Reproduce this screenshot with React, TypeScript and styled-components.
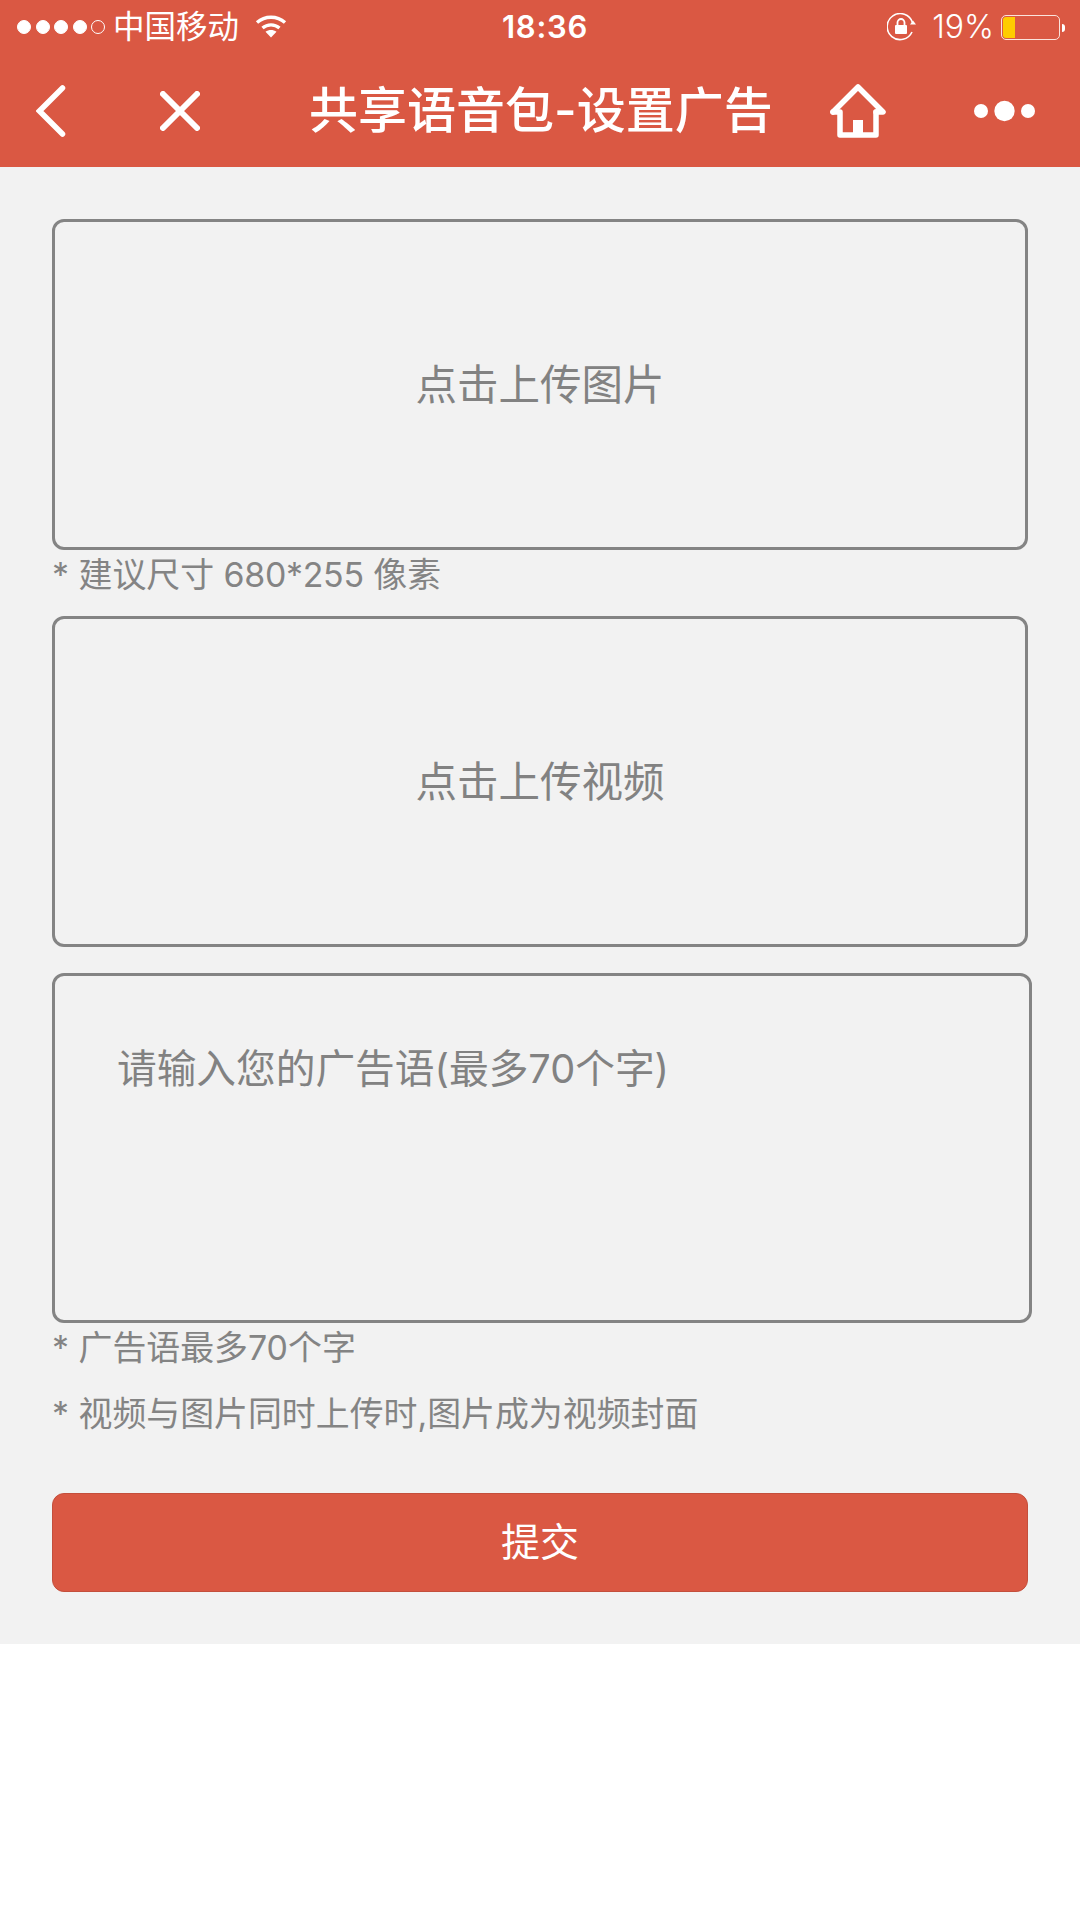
import React from "react";
import styled, { createGlobalStyle } from "styled-components";

const FONT = `"Inter", "Noto Sans CJK SC", sans-serif`;

const Global = createGlobalStyle`
  html, body { margin: 0; padding: 0; background: #fff; }
  body { font-family: ${FONT}; width: 1080px; height: 1920px; overflow: hidden; }
  * { box-sizing: border-box; }
`;

const Header = styled.header`
  background: #da5843;
  height: 167px;
  color: #fff;
  display: flex;
  flex-direction: column;
`;

const StatusBar = styled.div`
  height: 54px;
  display: grid;
  grid-template-columns: 1fr auto 1fr;
  align-items: center;
  padding: 0 16px 0 17px;
`;

const StatusGroup = styled.div<{ $end?: boolean }>`
  display: flex;
  align-items: center;
  justify-content: ${(p) => (p.$end ? "flex-end" : "flex-start")};
`;

const SignalDots = styled.div`
  display: flex;
  gap: 4.5px;
  margin-right: 8px;
`;

const SignalDot = styled.span<{ $off?: boolean }>`
  width: 14px;
  height: 14px;
  border-radius: 50%;
  border: 1px solid #fff;
  background: ${(p) => (p.$off ? "transparent" : "#fff")};
`;

const Carrier = styled.span`
  font-size: 31.5px;
  line-height: 40px;
  margin-right: 16px;
`;

const WifiIcon = styled.svg`
  margin-bottom: 3px;
`;

const Clock = styled.span`
  margin-left: 9px;
  font-size: 31px;
  line-height: 40px;
  font-weight: 600;
  letter-spacing: 0.7px;
`;

const Percent = styled.span`
  font-size: 32px;
  font-weight: 300;
  line-height: 40px;
  margin: 0 7px 0 15px;
`;

const Battery = styled.div`
  width: 59px;
  height: 25px;
  border: 1px solid #fbe3dc;
  border-radius: 5px;
  padding: 1px;
  margin-right: 4px;
  display: flex;
  position: relative;
  &::after {
    content: "";
    position: absolute;
    right: -6px;
    top: 8px;
    width: 3px;
    height: 8px;
    border-radius: 0 3px 3px 0;
    background: #fff;
  }
`;

const BatteryFill = styled.div`
  width: 12px;
  background: #ffcc00;
  border-radius: 3px 0 0 3px;
`;

const NavBar = styled.nav`
  flex: 1;
  display: grid;
  grid-template-columns: 124px 149px 521px 144px 1fr;
  align-items: center;
  padding-left: 36px;
`;

const NavSlot = styled.div`
  display: flex;
  align-items: center;
`;

const Title = styled.h1`
  margin: 0;
  font-size: 49px;
  line-height: 60px;
  font-weight: 500;
  white-space: nowrap;
`;

const Main = styled.main`
  background: #f2f2f2;
  height: 1477px;
  padding: 52px 48px 0 52px;
  display: flex;
  flex-direction: column;
  align-items: flex-start;
`;

const UploadBox = styled.div`
  width: 976px;
  height: 331px;
  border: 3px solid #848484;
  border-radius: 12px;
  padding-bottom: 5px;
  display: flex;
  align-items: center;
  justify-content: center;
  color: #828282;
  font-size: 41.5px;
`;

const Hint = styled.p<{ $h: number }>`
  margin: 0;
  height: ${(p) => p.$h}px;
  color: #848484;
  font-size: 33.9px;
  line-height: 50px;
  white-space: pre;
`;

const Size = styled.span`
  letter-spacing: -0.3px;
`;

const Gap = styled.div<{ $h: number }>`
  height: ${(p) => p.$h}px;
`;

const AdInput = styled.div`
  width: 980px;
  height: 350px;
  border: 3px solid #848484;
  border-radius: 12px;
  padding: 58px 0 0 62px;
  color: #828282;
  font-size: 39.7px;
  line-height: 70px;
  white-space: nowrap;
`;

const Submit = styled.button`
  width: 976px;
  height: 99px;
  border: 1px solid #c44f3c;
  border-radius: 12px;
  background: #da5843;
  color: #fff;
  font-family: ${FONT};
  font-size: 39px;
  padding: 0 0 7px;
`;

export default function App() {
  return (
    <>
      <Global />
      <Header>
        <StatusBar>
          <StatusGroup>
            <SignalDots>
              <SignalDot />
              <SignalDot />
              <SignalDot />
              <SignalDot />
              <SignalDot $off />
            </SignalDots>
            <Carrier>中国移动</Carrier>
            <WifiIcon width="32" height="24" viewBox="0 0 32 24" fill="none" stroke="#fff" strokeWidth="3.4">
              <path d="M2 8.5C10 1.5 22 1.5 30 8.5" />
              <path d="M7.5 14C12.5 9.8 19.5 9.8 24.5 14" />
              <path d="M16 23.5l-5.5-5.8c3.2-2.4 7.8-2.4 11 0z" fill="#fff" stroke="none" />
            </WifiIcon>
          </StatusGroup>
          <Clock>18:36</Clock>
          <StatusGroup $end>
            <svg width="30" height="28" viewBox="0 0 30 28" fill="none" stroke="#fff" strokeWidth="1.6">
              <path d="M25.5 9.5A13 13 0 1 0 25 19" />
              <path d="M23 11.5h6l-3-4z" fill="#fff" stroke="none" />
              <rect x="8" y="12" width="12" height="9" rx="1" fill="#fff" stroke="none" />
              <path d="M10.5 12V9.5a3.5 3.5 0 0 1 7 0V12" strokeWidth="1.8" />
            </svg>
            <Percent>19%</Percent>
            <Battery>
              <BatteryFill />
            </Battery>
          </StatusGroup>
        </StatusBar>
        <NavBar>
          <NavSlot>
            <svg width="30" height="52" viewBox="0 0 30 52" fill="none" stroke="#fff" strokeWidth="5.5" strokeLinecap="round" strokeLinejoin="miter">
              <path d="M26.5 3L3.5 26l23 23" />
            </svg>
          </NavSlot>
          <NavSlot>
            <svg width="40" height="40" viewBox="0 0 40 40" fill="none" stroke="#fff" strokeWidth="6" strokeLinecap="round">
              <path d="M3 3l34 34M37 3L3 37" />
            </svg>
          </NavSlot>
          <Title>共享语音包-设置广告</Title>
          <NavSlot>
            <svg width="56" height="54" viewBox="0 0 56 54" fill="none" stroke="#fff" strokeWidth="5.5" strokeLinejoin="round" strokeLinecap="round">
              <path d="M3 28L28 3l25 25h-7" />
              <path d="M3 28h7v23h36V28" />
              <path d="M23 50V36h10v14" fill="#fff" stroke="none" />
            </svg>
          </NavSlot>
          <NavSlot>
            <svg width="61" height="22" viewBox="0 0 61 22" fill="#fff">
              <circle cx="7" cy="11" r="7" />
              <circle cx="30.5" cy="11" r="10.2" />
              <circle cx="54" cy="11" r="7" />
            </svg>
          </NavSlot>
        </NavBar>
      </Header>
      <Main>
        <UploadBox>点击上传图片</UploadBox>
        <Hint $h={66}>
          * 建议尺寸 <Size>680*255</Size> 像素
        </Hint>
        <UploadBox>点击上传视频</UploadBox>
        <Gap $h={26} />
        <AdInput>请输入您的广告语(最多70个字)</AdInput>
        <Hint $h={66}>* 广告语最多70个字</Hint>
        <Hint $h={104}>* 视频与图片同时上传时,图片成为视频封面</Hint>
        <Submit>提交</Submit>
      </Main>
    </>
  );
}
